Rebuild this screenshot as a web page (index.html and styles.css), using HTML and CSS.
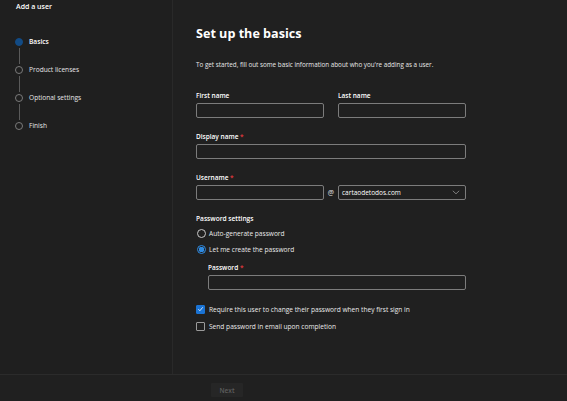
FILE: index.html
```html
<!DOCTYPE html>
<html lang="en">
<head>
<meta charset="utf-8">
<title>Add a user</title>
<link rel="stylesheet" href="styles.css">
</head>
<body>
<div class="page">
  <div class="main">
    <aside class="side">
      <div class="title">Add a user</div>
      <ol class="steps">
        <li class="step active"><span class="dot"></span><span class="step-label">Basics</span></li>
        <li class="step"><span class="dot"></span><span class="step-label">Product licenses</span></li>
        <li class="step"><span class="dot"></span><span class="step-label">Optional settings</span></li>
        <li class="step last"><span class="dot"></span><span class="step-label">Finish</span></li>
      </ol>
    </aside>
    <section class="content">
      <h1 class="heading">Set up the basics</h1>
      <p class="desc">To get started, fill out some basic information about who you're adding as a user.</p>

      <div class="row names">
        <div class="field">
          <label class="label">First name</label>
          <div class="input"></div>
        </div>
        <div class="field">
          <label class="label">Last name</label>
          <div class="input"></div>
        </div>
      </div>

      <div class="field block">
        <label class="label">Display name <span class="req">*</span></label>
        <div class="input"></div>
      </div>

      <div class="field block">
        <label class="label">Username <span class="req">*</span></label>
        <div class="user-row">
          <div class="input"></div>
          <span class="at">@</span>
          <div class="input select">
            <span class="select-text">cartaodetodos.com</span>
            <svg class="chev" width="8" height="5" viewBox="0 0 8 5"><path d="M0.8 0.8 L4 3.8 L7.2 0.8" fill="none" stroke="#a8a8a8" stroke-width="0.7"/></svg>
          </div>
        </div>
      </div>

      <div class="section-title">Password settings</div>
      <div class="radio first"><span class="radio-dot"></span><span>Auto-generate password</span></div>
      <div class="radio checked"><span class="radio-dot"></span><span>Let me create the password</span></div>

      <div class="field pw">
        <label class="label">Password <span class="req">*</span></label>
        <div class="input"></div>
      </div>

      <div class="check first checked">
        <span class="box"><svg width="8" height="8" viewBox="0 0 8 8"><path d="M1.5 4.2 L3.3 6 L6.6 2" fill="none" stroke="#fff" stroke-width="0.9"/></svg></span>
        <span>Require this user to change their password when they first sign in</span>
      </div>
      <div class="check"><span class="box"></span><span>Send password in email upon completion</span></div>
    </section>
  </div>
  <footer class="footer">
    <button class="next" type="button">Next</button>
  </footer>
</div>
</body>
</html>
```

FILE: styles.css
```css
* { box-sizing: border-box; }
html, body {
  margin: 0;
  padding: 0;
  background: #202020;
}
body {
  font-family: "Open Sans", "Noto Sans", sans-serif;
  color: #ffffff;
  width: 567px;
  height: 401px;
  overflow: hidden;
}
.page {
  display: flex;
  flex-direction: column;
  height: 401px;
}
.main {
  display: grid;
  grid-template-columns: 173px 1fr;
  height: 375px;
  border-bottom: 1px solid #2b2b2b;
}
.side {
  border-right: 1px solid #292929;
  background: #1f1f1f;
}
.title {
  font-size: 7px;
  font-weight: 600;
  line-height: 10px;
  padding: 2px 0 0 16px;
  color: #fff;
}
.steps {
  list-style: none;
  margin: 25px 0 0 0;
  padding: 0 0 0 15px;
}
.step {
  position: relative;
  display: flex;
  align-items: center;
  height: 10px;
  margin-bottom: 18px;
}
.step::after {
  content: "";
  position: absolute;
  left: 4px;
  top: 11px;
  width: 1px;
  height: 16px;
  background: #5a5a5a;
}
.step.last::after { display: none; }
.dot {
  width: 8px;
  height: 8px;
  border-radius: 50%;
  border: 1px solid #7a7a7a;
  flex: none;
}
.step.active .dot {
  background: #124b85;
  border-color: #124b85;
}
.step-label {
  margin-left: 6px;
  font-size: 6.6px;
  color: #e6e6e6;
  line-height: 10px;
}
.step.active .step-label {
  font-weight: 600;
  color: #fff;
}
.content {
  padding: 24px 0 0 23px;
  width: 293px;
  display: flex;
  flex-direction: column;
}
.heading {
  margin: 0;
  font-size: 12.6px;
  font-weight: 700;
  line-height: 20px;
  color: #fff;
}
.desc {
  margin: 16px 0 0 0;
  font-size: 6.3px;
  line-height: 10px;
  color: #e8e8e8;
}
.row {
  display: grid;
  grid-template-columns: 128px 128px;
  column-gap: 14px;
}
.names { margin-top: 21px; }
.field {
  display: flex;
  flex-direction: column;
}
.block { margin-top: 14px; width: 270px; }
.label {
  font-size: 6.5px;
  font-weight: 600;
  line-height: 10px;
  margin-bottom: 2px;
  color: #fff;
}
.req { color: #e0393e; }
.input {
  height: 15px;
  border: 1px solid #7c7c7c;
  border-radius: 2px;
  background: #202020;
}
.user-row {
  display: grid;
  grid-template-columns: 128px 14px 128px;
  align-items: center;
}
.at {
  font-size: 7px;
  text-align: center;
  color: #e0e0e0;
  line-height: 15px;
}
.select {
  display: flex;
  align-items: center;
  justify-content: space-between;
  padding: 0 5px 0 3px;
}
.select-text {
  font-size: 6.5px;
  color: #fff;
}
.chev { display: block; }
.section-title {
  margin-top: 14px;
  font-size: 6.6px;
  font-weight: 600;
  line-height: 10px;
}
.radio {
  display: flex;
  align-items: center;
  height: 12px;
  margin-top: 4px;
  font-size: 6.6px;
  color: #eaeaea;
}
.radio.first { margin-top: 3px; }
.radio-dot {
  width: 9px;
  height: 9px;
  border-radius: 50%;
  border: 1px solid #c8c8c8;
  margin: 0 3px 0 1px;
  flex: none;
}
.radio.checked .radio-dot {
  border-color: #2f8ae0;
  background: radial-gradient(circle, #2f8ae0 0 2.6px, #202020 3px);
}
.pw {
  margin: 8px 0 0 12px;
  width: 258px;
}
.check {
  display: flex;
  align-items: center;
  height: 12px;
  margin-top: 5px;
  font-size: 6.6px;
  color: #eaeaea;
}
.check.first { margin-top: 13px; }
.box {
  width: 9px;
  height: 9px;
  border: 1px solid #9a9a9a;
  border-radius: 1px;
  margin: 0 4px 0 0;
  flex: none;
  display: flex;
  align-items: center;
  justify-content: center;
}
.check.checked .box {
  background: #1a73d4;
  border-color: #1a73d4;
}
.box svg { display: block; }
.footer {
  flex: 1;
  display: flex;
  align-items: flex-start;
  padding: 8px 0 0 211px;
}
.next {
  width: 32px;
  height: 14px;
  border: none;
  border-radius: 1px;
  background: #262626;
  color: #5e5e5e;
  font-family: "Open Sans", "Noto Sans", sans-serif;
  font-size: 6.5px;
  font-weight: 600;
  padding: 0;
}
```
